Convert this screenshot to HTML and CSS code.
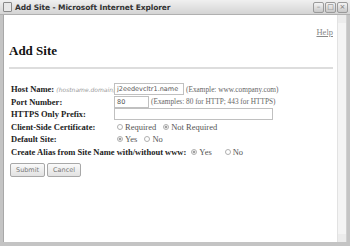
FILE: index.html
```html
<!DOCTYPE html>
<html>
<head>
    <title>Add Site</title>
    <link rel="stylesheet" href="styles.css">
</head>
<body>
    <div class="window">
        <div class="titlebar">
            <span class="app-icon"></span>
            <span class="title-text">Add Site - Microsoft Internet Explorer</span>
            <span class="ctl">&#8211;</span>
            <span class="ctl">&#9633;</span>
            <span class="ctl">&#215;</span>
        </div>
        <div class="frame">
            <div class="page">
                <div class="help-row"><a class="help" href="#">Help</a></div>
                <h1 class="heading">Add Site</h1>
                <div class="rule"></div>
                <form class="site-form">
                    <div class="row">
                        <span class="label">Host Name: <i class="hint">(hostname.domain)</i></span>
                        <span class="field">
                            <span class="textbox w-host">j2eedevcltr1.name</span>
                            <span class="example">(Example: www.company.com)</span>
                        </span>
                    </div>
                    <div class="row">
                        <span class="label">Port Number:</span>
                        <span class="field">
                            <span class="textbox w-port">80</span>
                            <span class="example">(Examples: 80 for HTTP; 443 for HTTPS)</span>
                        </span>
                    </div>
                    <div class="row">
                        <span class="label">HTTPS Only Prefix:</span>
                        <span class="field"><span class="textbox w-prefix"></span></span>
                    </div>
                    <div class="row">
                        <span class="label">Client-Side Certificate:</span>
                        <span class="field">
                            <span class="radio"></span><span class="opt">Required</span>
                            <span class="radio on"></span><span class="opt">Not Required</span>
                        </span>
                    </div>
                    <div class="row">
                        <span class="label">Default Site:</span>
                        <span class="field">
                            <span class="radio on"></span><span class="opt">Yes</span>
                            <span class="radio"></span><span class="opt">No</span>
                        </span>
                    </div>
                    <div class="row">
                        <span class="label wide">Create Alias from Site Name with/without www:</span>
                        <span class="radio on"></span><span class="opt spaced">Yes</span>
                        <span class="radio"></span><span class="opt">No</span>
                    </div>
                    <div class="buttons">
                        <span class="btn">Submit</span>
                        <span class="btn">Cancel</span>
                    </div>
                </form>
            </div>
            <div class="scrollbar">
                <span class="arrow"></span>
                <span class="arrow"></span>
            </div>
        </div>
    </div>
</body>
</html>
```
FILE: styles.css
```css
body {
    margin: 0;
    background-color: #FFFFFF;
    font-family: "Liberation Serif", serif;
}
.window {
    width: 350px;
    height: 246px;
    display: flex;
    flex-direction: column;
    background-color: #c4c4c4;
}
/* title bar */
.titlebar {
    height: 14px;
    display: flex;
    align-items: center;
    padding: 0 2px 0 3px;
    background: linear-gradient(#f0f0f0, #d4d4d4);
    border-bottom: 1px solid #b0b0b0;
}
.app-icon {
    width: 7px;
    height: 8px;
    margin-right: 3px;
    background-color: #e8e8e8;
    border: 1px solid #8a8a8a;
    border-radius: 1px;
}
.title-text {
    flex: 1;
    font-family: "DejaVu Sans", sans-serif;
    font-size: 7.5px;
    font-weight: bold;
    color: #333333;
    letter-spacing: -0.1px;
}
.ctl {
    width: 9px;
    height: 9px;
    margin-left: 1px;
    border: 1px solid #9a9a9a;
    border-radius: 2px;
    background: linear-gradient(#f4f4f4, #c8c8c8);
    font-family: "DejaVu Sans", sans-serif;
    font-size: 7px;
    line-height: 9px;
    text-align: center;
    color: #777777;
}
/* window body */
.frame {
    flex: 1;
    display: flex;
    border: 3px solid #c4c4c4;
    border-top: 0;
    border-bottom-width: 4px;
}
.page {
    flex: 1;
    background-color: #FFFFFF;
    padding: 6px 4px 0 5px;
    border-left: 1px solid #a8a8a8;
}
.scrollbar {
    width: 8px;
    display: flex;
    flex-direction: column;
    justify-content: space-between;
    background-color: #f4f4f4;
    border-left: 1px solid #e2e2e2;
    border-right: 1px solid #d0d0d0;
}
.arrow {
    height: 8px;
    background-color: #ececec;
}
/* page content */
.help-row {
    text-align: right;
    height: 12px;
}
.help {
    font-size: 8.5px;
    color: #888888;
    line-height: 12px;
}
.heading {
    margin: 10px 0 0 0;
    font-size: 13px;
    line-height: 15px;
    color: #111111;
}
.rule {
    height: 2px;
    margin: 9px 0 14px 0;
    background-color: #dddddd;
}
.site-form {
    padding-left: 2px;
    font-size: 8.5px;
    color: #222222;
}
.row {
    display: flex;
    align-items: center;
    height: 12.5px;
}
.label {
    width: 103px;
    font-weight: bold;
    white-space: nowrap;
}
.label.wide {
    width: auto;
    margin-right: 2px;
}
.hint {
    font-family: "DejaVu Sans", sans-serif;
    font-weight: normal;
    font-size: 6px;
    color: #999999;
}
.field {
    display: flex;
    align-items: center;
}
.textbox {
    height: 10px;
    margin-right: 2px;
    padding-left: 2px;
    border: 1px solid #c0c0c0;
    font-family: "DejaVu Sans", sans-serif;
    font-size: 6.5px;
    line-height: 10px;
    color: #555555;
}
.w-host { width: 66px; }
.w-port { width: 31px; }
.w-prefix { width: 155px; }
.example {
    font-size: 7.3px;
    color: #666666;
}
.radio {
    width: 4px;
    height: 4px;
    margin: 0 2px 0 3px;
    border: 1px solid #b0b0b0;
    border-radius: 50%;
    background-color: #FFFFFF;
}
.radio.on {
    background: radial-gradient(#a0a0a0 40%, #FFFFFF 60%);
}
.opt {
    font-weight: normal;
    color: #555555;
    margin-right: 4px;
}
.opt.spaced {
    margin-right: 10px;
}
.buttons {
    display: flex;
    margin: 5px 0 0 -1px;
}
.btn {
    height: 12px;
    margin-right: 2px;
    padding: 0 5px;
    border: 1px solid #a8a8a8;
    border-radius: 2px;
    background: linear-gradient(#fafafa, #e2e2e2);
    font-family: "DejaVu Sans", sans-serif;
    font-size: 6.5px;
    line-height: 12px;
    color: #777777;
}
```
